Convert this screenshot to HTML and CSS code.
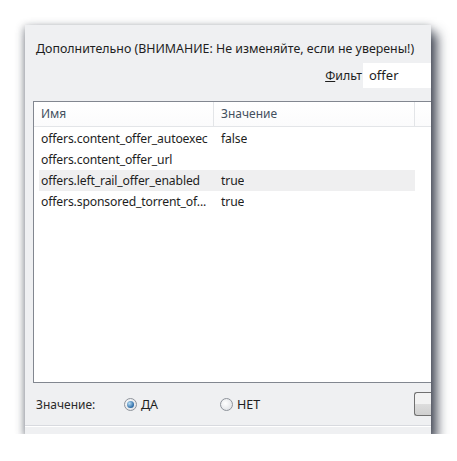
FILE: index.html
```html
<!DOCTYPE html>
<html>
<head>
<meta charset="utf-8">
<link rel="stylesheet" href="styles.css">
</head>
<body>
<div class="panel">
  <div class="title">Дополнительно (ВНИМАНИЕ: Не изменяйте, если не уверены!)</div>
  <div class="filter-row">
    <label class="filter-label"><u>Ф</u>ильт</label>
    <div class="filter-input">offer</div>
  </div>
  <div class="list">
    <div class="list-head">
      <div class="hcell c1">Имя</div>
      <div class="hcell c2">Значение</div>
      <div class="hcell c3"></div>
    </div>
    <div class="rows">
      <div class="row"><div class="cell c1">offers.content_offer_autoexec</div><div class="cell c2">false</div></div>
      <div class="row"><div class="cell c1">offers.content_offer_url</div><div class="cell c2"></div></div>
      <div class="row hl"><div class="cell c1">offers.left_rail_offer_enabled</div><div class="cell c2">true</div></div>
      <div class="row"><div class="cell c1">offers.sponsored_torrent_of...</div><div class="cell c2">true</div></div>
    </div>
  </div>
  <div class="bottom">
    <span class="val-label">Значение:</span>
    <span class="radio on"></span><span class="rlabel yes">ДА</span>
    <span class="radio"></span><span class="rlabel">НЕТ</span>
    <span class="button"></span>
  </div>
  <div class="sep"></div>
</div>
</body>
</html>
```
FILE: styles.css
```css
html, body {
  margin: 0;
  background: #ffffff;
}
body {
  padding: 25px 0 0 25px;
  font-family: "Noto Sans", "Open Sans", sans-serif;
  font-size: 12px;
  color: #1e1e1e;
}
.panel {
  width: 398px;
  height: 409px;
  padding-left: 8px;
  background: #eff0f2;
  overflow: hidden;
  box-shadow: 6px 8px 11px rgba(45, 50, 65, 0.85), -1px 2px 8px rgba(45, 50, 65, 0.45);
  display: flex;
  flex-direction: column;
}
.title {
  margin: 16px 0 0 3px;
  line-height: 16px;
  font-size: 12.4px;
  white-space: nowrap;
}
.filter-row {
  margin-top: 6px;
  display: flex;
  align-items: center;
  height: 25px;
}
.filter-label {
  margin-left: auto;
  padding-right: 1px;
  font-size: 12.4px;
}
.filter-input {
  width: 69px;
  height: 25px;
  margin-right: -1px;
  background: #ffffff;
  padding-left: 6px;
  box-sizing: border-box;
  line-height: 24px;
  font-size: 13px;
}
.list {
  margin-top: 13px;
  width: 420px;
  height: 282px;
  box-sizing: border-box;
  background: #ffffff;
  border: 1px solid #828790;
  border-right: none;
}
.list-head {
  display: flex;
  height: 24px;
  border-bottom: 1px solid #e3e5e8;
  background: linear-gradient(#ffffff, #fbfbfc);
  color: #44505f;
}
.hcell {
  line-height: 24px;
  box-sizing: border-box;
  border-right: 1px solid #e3e5e8;
}
.list-head .c1 { width: 180px; padding-left: 7px; }
.list-head .c2 { width: 201px; padding-left: 7px; }
.list-head .c3 { flex: 1; border-right: none; }
.rows {
  padding: 1px 0 0 5px;
}
.row {
  display: flex;
  width: 376px;
  height: 21px;
  line-height: 21px;
  font-size: 12.2px;
  letter-spacing: -0.15px;
}
.row.hl {
  background: #efeff0;
}
.cell {
  white-space: nowrap;
  overflow: hidden;
}
.row .c1 { width: 175px; padding-left: 2px; box-sizing: border-box; flex: none; }
.row .c2 { padding-left: 7px; }
.bottom {
  display: flex;
  align-items: center;
  height: 24px;
  margin-top: 9px;
  white-space: nowrap;
}
.val-label {
  margin-left: 3px;
  width: 88px;
  color: #2a2a2a;
}
.radio {
  width: 11px;
  height: 11px;
  border: 1px solid #8e939b;
  border-radius: 50%;
  background: radial-gradient(circle at 40% 40%, #ffffff, #d8dbe0);
  position: relative;
  flex: none;
}
.radio.on::after {
  content: "";
  position: absolute;
  left: 2px;
  top: 2px;
  width: 7px;
  height: 7px;
  border-radius: 50%;
  background: radial-gradient(circle at 35% 35%, #b9def5, #2a6aa6 70%, #174a80);
}
.rlabel {
  margin-left: 4px;
  font-size: 12.5px;
}
.rlabel.yes {
  width: 79px;
}
.button {
  margin-left: auto;
  margin-right: -4px;
  width: 20px;
  height: 22px;
  border: 1px solid #707070;
  border-right: none;
  border-radius: 3px 0 0 3px;
  background: linear-gradient(#f2f2f2 50%, #dddddd 50%, #cfcfcf);
}
.sep {
  margin: 9px 0 0 -8px;
  width: 406px;
  border-top: 1px solid #d8dadf;
  border-bottom: 1px solid #ffffff;
}
```
